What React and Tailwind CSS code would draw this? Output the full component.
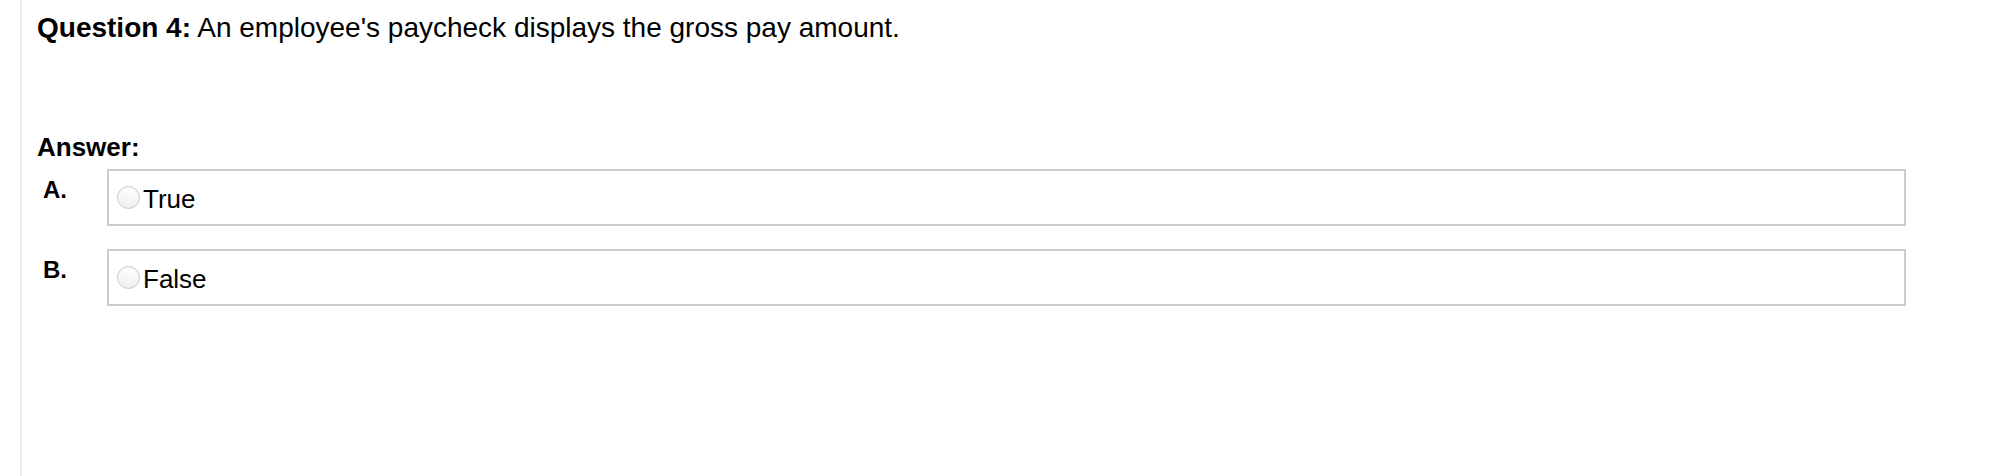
import React from 'react';

const options = [
    { letter: 'A.', text: 'True' },
    { letter: 'B.', text: 'False' },
];

function Radio() {
    return (
        <span className="inline-block w-[23px] h-[23px] rounded-full border border-[#c8c8c8] bg-gradient-to-b from-white to-[#eeeeee] shadow-[inset_0_1px_1px_rgba(0,0,0,0.05)] shrink-0" />
    );
}

export default function App() {
    return (
        <div className="min-h-[476px] bg-white text-black font-['Liberation_Sans',Arial,sans-serif]">
            <div className="ml-[20px] min-h-[476px] border-l-2 border-[#ececec] pl-[15px] pt-[11px]">
                <p className="text-[28px] leading-[34px]">
                    <b>Question 4:</b> An employee's paycheck displays the gross pay amount.
                </p>

                <p className="mt-[87px] text-[26px] leading-[30px] font-bold">Answer:</p>

                <div className="mt-[7px] flex flex-col gap-[23px]">
                    {options.map(opt => (
                        <div key={opt.letter} className="flex items-start">
                            <span className="w-[70px] pl-[6px] pt-[7px] text-[24px] leading-[28px] font-bold">{opt.letter}</span>
                            <label className="flex items-center h-[57px] w-[1799px] border-2 border-[#cccccc] pl-[8px]">
                                <Radio />
                                <span className="ml-[3px] pt-[2px] text-[26px] leading-[30px]">{opt.text}</span>
                            </label>
                        </div>
                    ))}
                </div>
            </div>
        </div>
    );
}
